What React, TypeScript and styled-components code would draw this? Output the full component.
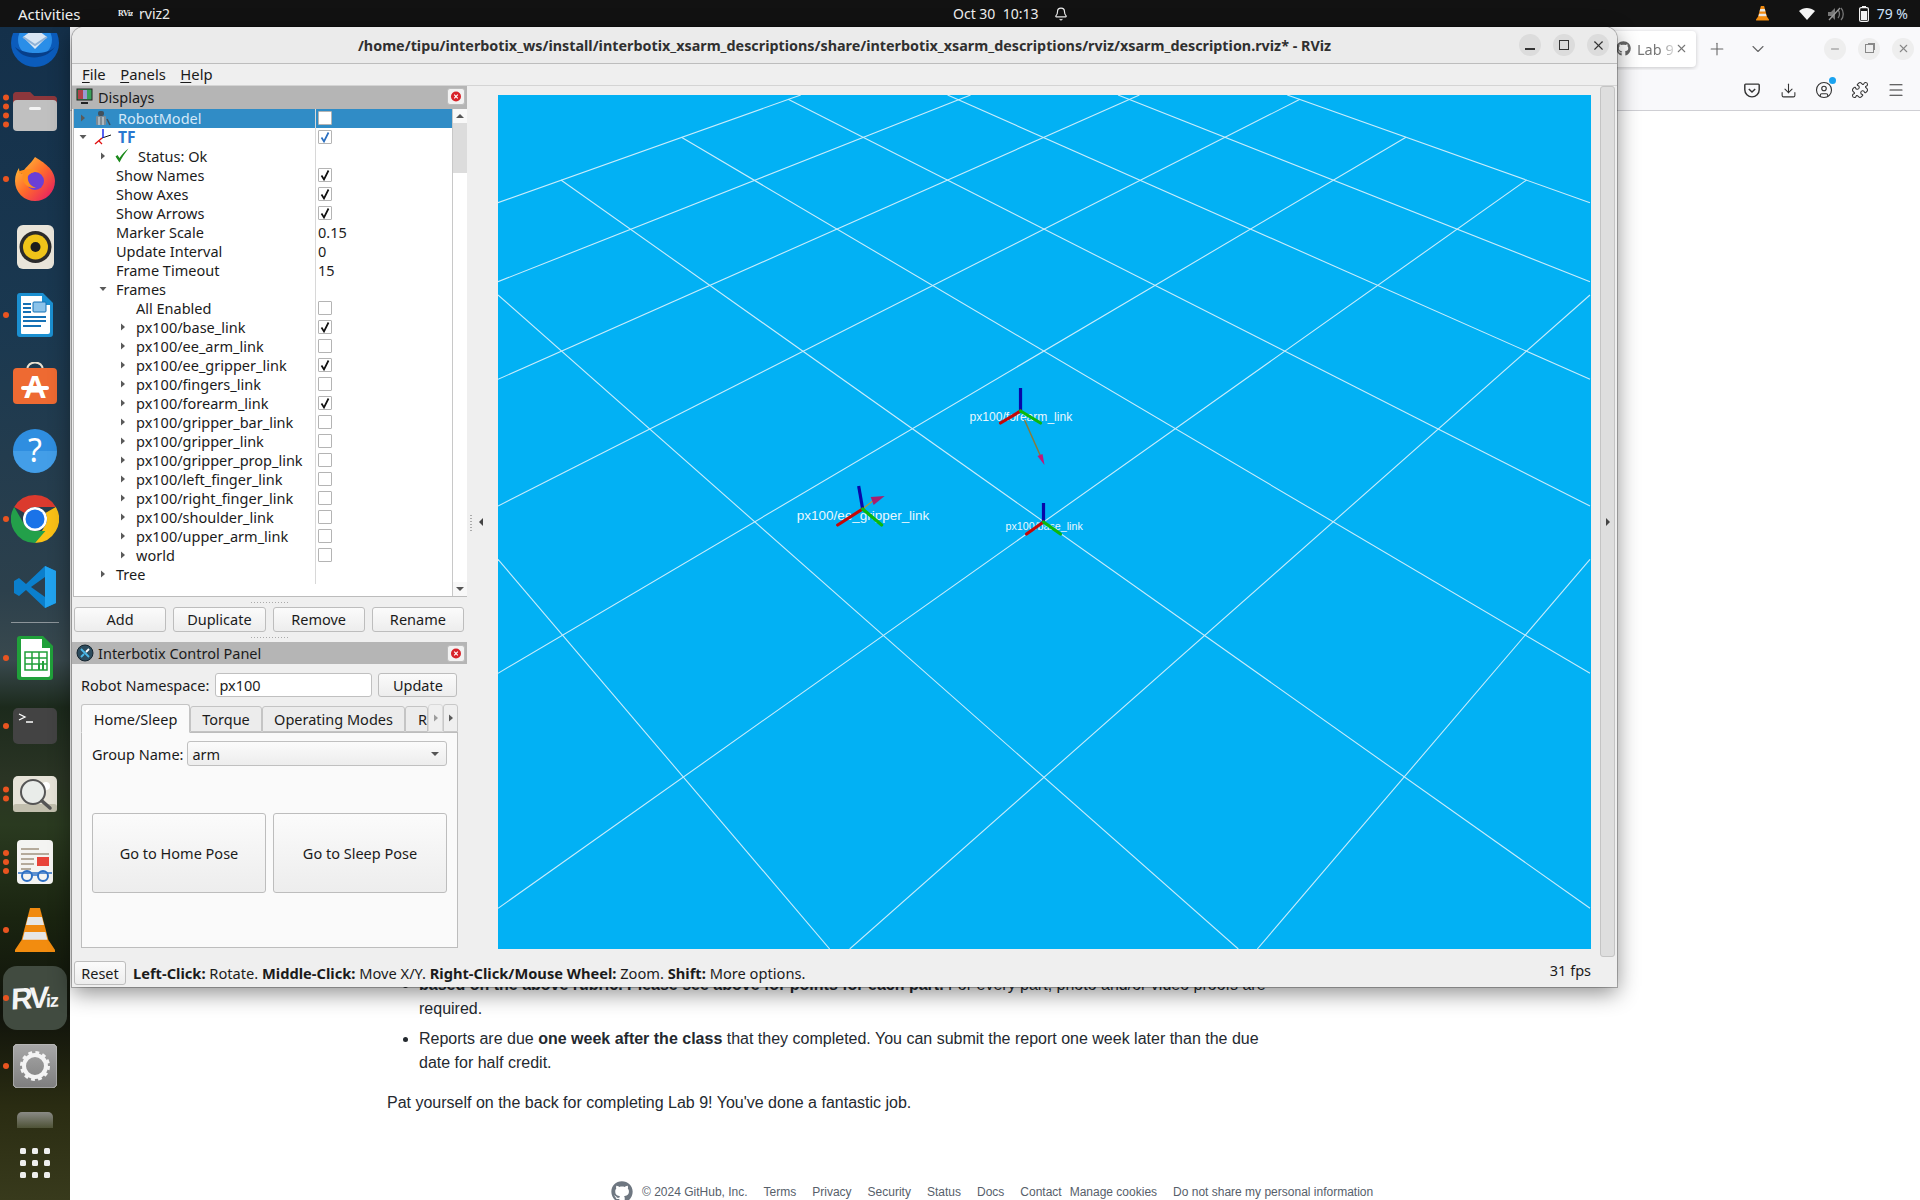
import styled, { createGlobalStyle } from 'styled-components';
import { Bell, ChevronDown, CircleUser, Download, Menu, Plus, Puzzle, Minus, X } from 'lucide-react';
import { FaGithub } from 'react-icons/fa';

const UI_FONT = `"Noto Sans", "Open Sans", sans-serif`;

const GlobalStyle = createGlobalStyle`
  html, body {
    margin: 0;
    padding: 0;
    width: 1920px;
    height: 1200px;
    overflow: hidden;
    background: #fff;
  }
  * { box-sizing: border-box; }
`;

/* ---------- rviz tree data ---------- */

type TreeRow = {
  label: string;
  depth: number;
  arrow?: 'open' | 'closed';
  icon?: 'robot' | 'tf' | 'ok';
  check?: boolean;
  value?: string;
  selected?: boolean;
  blue?: boolean;
};

const frames = [
  ['px100/base_link', true],
  ['px100/ee_arm_link', false],
  ['px100/ee_gripper_link', true],
  ['px100/fingers_link', false],
  ['px100/forearm_link', true],
  ['px100/gripper_bar_link', false],
  ['px100/gripper_link', false],
  ['px100/gripper_prop_link', false],
  ['px100/left_finger_link', false],
  ['px100/right_finger_link', false],
  ['px100/shoulder_link', false],
  ['px100/upper_arm_link', false],
  ['world', false],
] as const;

const rows: TreeRow[] = [
  { label: 'RobotModel', depth: 0, arrow: 'closed', icon: 'robot', check: false, selected: true },
  { label: 'TF', depth: 0, arrow: 'open', icon: 'tf', check: true, blue: true },
  { label: 'Status: Ok', depth: 1, arrow: 'closed', icon: 'ok' },
  { label: 'Show Names', depth: 1, check: true },
  { label: 'Show Axes', depth: 1, check: true },
  { label: 'Show Arrows', depth: 1, check: true },
  { label: 'Marker Scale', depth: 1, value: '0.15' },
  { label: 'Update Interval', depth: 1, value: '0' },
  { label: 'Frame Timeout', depth: 1, value: '15' },
  { label: 'Frames', depth: 1, arrow: 'open' },
  { label: 'All Enabled', depth: 2, check: false },
  ...frames.map(([label, check]) => ({ label, check, depth: 2, arrow: 'closed' as const })),
  { label: 'Tree', depth: 1, arrow: 'closed' },
];

/* grid lines in screen coordinates, the svg viewBox matches the view's place */
const gridLines = [
  [498, 202.7, 801, 95],
  [498, 281.7, 971, 95],
  [498, 379.3, 1140, 95],
  [498, 506, 1300.7, 99.3],
  [498, 673.3, 1406.8, 137.3],
  [498, 908.3, 1527.5, 180],
  [850, 949, 1591, 295],
  [1258, 949, 1591, 559.3],
  [1591, 202.7, 1288, 95],
  [1591, 281.7, 1118.6, 95],
  [1591, 379.3, 948, 95],
  [1591, 506, 788.4, 99.3],
  [1591, 673.3, 681.6, 137.3],
  [1591, 908.3, 561, 180],
  [1239, 949, 498, 295],
  [830, 949, 498, 559.3],
];

const footerLinks = ['Terms', 'Privacy', 'Security', 'Status', 'Docs', 'Contact'];

/* ---------- small drawings ---------- */

const Expander = ({ open }: { open: boolean }) => (
  <svg width="10" height="10" viewBox="0 0 10 10">
    {open ? <path d="M1.5 3h7L5 7z" fill="#5a5a5a" /> : <path d="M3 1.5v7L7 5z" fill="#5a5a5a" />}
  </svg>
);

const RowIcon = ({ kind }: { kind: 'robot' | 'tf' | 'ok' }) => {
  if (kind === 'ok') {
    return (
      <svg width="16" height="15" viewBox="0 0 16 15">
        <path d="M1.500 8.500L3.500 7l2 3C8 6 11 3 14.500.5 11 5 8 9.500 5.500 14.500z" fill="#1c8a1c" />
      </svg>
    );
  }
  if (kind === 'tf') {
    return (
      <svg width="18" height="16" viewBox="0 0 18 16">
        <path d="M8 9L1 15" stroke="#e01010" strokeWidth="1.400" />
        <path d="M8 9l9-3" stroke="#111" strokeWidth="1" />
        <path d="M9 9V0" stroke="#1020f0" strokeWidth="1.400" />
        <path d="M5 12l3 3" stroke="#e01010" strokeWidth="1.200" />
      </svg>
    );
  }
  return (
    <svg width="18" height="16" viewBox="0 0 18 16">
      <rect x="4" y="1" width="6" height="5" rx="2" fill="#41505c" />
      <rect x="2" y="6" width="10" height="9" rx="1" fill="#7d8a94" />
      <path d="M5 7v8M9 7v8" stroke="#dfe6ea" strokeWidth="1" />
      <path d="M13 9l3 6" stroke="#41505c" strokeWidth="1.5" />
    </svg>
  );
};

const CloseBadge = () => (
  <svg width="18" height="17" viewBox="0 0 18 17">
    <rect x=".5" y=".5" width="17" height="16" rx="2.500" fill="#f2f2f2" stroke="#bdbdbd" />
    <circle cx="9" cy="8.500" r="5" fill="#d8232a" />
    <path d="M7.200 6.700l3.600 3.600M10.800 6.700l-3.600 3.600" stroke="#fff" strokeWidth="1.200" />
  </svg>
);

const ScrollArrow = ({ up }: { up: boolean }) => (
  <svg width="12" height="8" viewBox="0 0 12 8">
    <path d={up ? 'M2 6h8L6 2z' : 'M2 2h8L6 6z'} fill="#555" />
  </svg>
);

const Axes = ({ o, blue, red, green }: { o: number[]; blue: number[]; red: number[]; green: number[] }) => (
  <g strokeWidth="3.200" strokeLinecap="round">
    <line x1={o[0]} y1={o[1]} x2={blue[0]} y2={blue[1]} stroke="#0808a8" strokeLinecap="butt" />
    <line x1={o[0]} y1={o[1]} x2={red[0]} y2={red[1]} stroke="#c40808" />
    <line x1={o[0]} y1={o[1]} x2={green[0]} y2={green[1]} stroke="#0cb80c" />
  </g>
);

const Scene = () => (
  <svg width="100%" height="100%" viewBox="498 95 1094 854" preserveAspectRatio="none">
    {gridLines.map(([x1, y1, x2, y2]) => (
      <line key={`${x1}-${y1}-${x2}`} x1={x1} y1={y1} x2={x2} y2={y2} stroke="#c9ecfb" strokeWidth="1.100" />
    ))}
    <SceneLabel x="970" y="421" fontSize="12.100">px100/forearm_link</SceneLabel>
    <SceneLabel x="797" y="520" fontSize="13.500">px100/ee_gripper_link</SceneLabel>
    <SceneLabel x="1006" y="530.500" fontSize="10.700">px100/base_link</SceneLabel>
    <line x1="1025" y1="420" x2="1041" y2="456" stroke="#8a7a3a" strokeWidth="1.500" />
    <path d="M1038 456l5-2 2 11z" fill="#c2187a" />
    <line x1="863" y1="509" x2="873" y2="501" stroke="#a89a3a" strokeWidth="1.500" />
    <path d="M871 497l14-1-11 9z" fill="#a8206e" />
    <Axes o={[1021, 411]} blue={[1021, 388]} red={[1001, 423]} green={[1041, 423]} />
    <Axes o={[863, 509]} blue={[859, 486]} red={[838, 525]} green={[882, 525]} />
    <Axes o={[1044, 522]} blue={[1044, 503]} red={[1027, 534]} green={[1061, 534]} />
  </svg>
);

/* dock artwork */
const Thunderbird = () => (
  <svg width="48" height="48" viewBox="0 0 48 48">
    <circle cx="24" cy="24" r="24" fill="#0b5cbc" />
    <circle cx="24" cy="21" r="17" fill="#2a8ee8" />
    <path d="M12 18l12-9 12 9-12 12z" fill="#d8e6f4" />
    <path d="M12 18l12 8 12-8" fill="none" stroke="#8fb2d6" strokeWidth="2" />
    <path d="M4 28c8 14 30 14 40 0-8 8-30 8-40 0z" fill="#073f8a" />
  </svg>
);

const Files = () => (
  <svg width="44" height="40" viewBox="0 0 44 40">
    <path d="M0 5a4 4 0 014-4h13l4 4h19a4 4 0 014 4v10H0z" fill="#a8452e" />
    <path d="M0 5a4 4 0 014-4h13l4 4h19a4 4 0 014 4v2H0z" fill="#7b2f46" opacity=".6" />
    <rect y="9" width="44" height="31" rx="4" fill="#c0c0c0" />
    <rect x="16" y="16" width="12" height="3" rx="1.500" fill="#f5f5f5" />
  </svg>
);

const Firefox = () => (
  <svg width="44" height="44" viewBox="0 0 44 44">
    <defs>
      <linearGradient id="ffx" x1="0" y1="0" x2="1" y2="1">
        <stop offset="0" stopColor="#ffd23c" />
        <stop offset=".5" stopColor="#ff6a2b" />
        <stop offset="1" stopColor="#e3126e" />
      </linearGradient>
    </defs>
    <path d="M22 0c8 5 20 12 20 24a20 20 0 01-40 0c0-6 2-10 4-13 0 3 1 5 3 6 2-6 8-9 13-17z" fill="url(#ffx)" />
    <circle cx="22" cy="24" r="9" fill="#6b3fd6" />
    <path d="M5 15c6-3 14-5 22 0-6-1-10 1-12 4-1 5 2 10 8 12-9 1-15-6-13-14-2 0-4-1-5-2z" fill="#ff8f1f" />
  </svg>
);

const Rhythmbox = () => (
  <svg width="37" height="44" viewBox="0 0 37 44">
    <rect width="37" height="44" rx="6" fill="#e9e5da" />
    <circle cx="18.500" cy="22" r="16" fill="#2b2b2b" />
    <circle cx="18.500" cy="22" r="12.500" fill="#f0c419" />
    <circle cx="18.500" cy="22" r="5" fill="#1d1d1d" />
  </svg>
);

const Writer = () => (
  <svg width="36" height="44" viewBox="0 0 36 44">
    <path d="M3 0h23l10 10v31a3 3 0 01-3 3H3a3 3 0 01-3-3V3a3 3 0 013-3z" fill="#1b8fd0" />
    <path d="M4 3h21v9h8v27a2 2 0 01-2 2H5a1 1 0 01-1-1z" fill="#fff" />
    <path d="M6 11h8M6 15h8M6 19h8M6 24h23M6 28h23M6 33h18" stroke="#1470b5" strokeWidth="1.800" />
    <rect x="16" y="9" width="13" height="10" rx="1" fill="#8cc3ea" stroke="#1470b5" />
  </svg>
);

const Software = () => (
  <svg width="44" height="42" viewBox="0 0 44 42">
    <path d="M14 8c0-10 16-10 16 0" fill="none" stroke="#e9e0d0" strokeWidth="2" />
    <rect y="6" width="44" height="36" rx="4" fill="#ee6a32" />
    <text x="22" y="36" textAnchor="middle" fontFamily="Liberation Sans" fontWeight="700" fontSize="32" fill="#fff">A</text>
    <rect x="8" y="24" width="28" height="4" rx="2" fill="#fff" />
  </svg>
);

const Help = () => (
  <svg width="44" height="44" viewBox="0 0 44 44">
    <circle cx="22" cy="22" r="22" fill="#2f8ee0" />
    <path d="M0 22a22 22 0 0044 0z" fill="#52a9ec" opacity=".6" />
    <text x="22" y="33" textAnchor="middle" fontFamily="Noto Sans" fontSize="32" fill="#fff">?</text>
  </svg>
);

const Chrome = () => (
  <svg width="48" height="48" viewBox="0 0 48 48">
    <path d="M24 0a24 24 0 0120.800 12H24a12 12 0 00-10.400 6L3.200 12A24 24 0 0124 0z" fill="#db3a2e" />
    <path d="M44.800 12A24 24 0 0124 48l10.400-18a12 12 0 000-12z" fill="#fbc116" />
    <path d="M3.200 12l10.400 18a12 12 0 0010.400 6h10.400L24 48A24 24 0 013.200 12z" fill="#23a04a" />
    <circle cx="24" cy="24" r="12" fill="#fff" />
    <circle cx="24" cy="24" r="9.500" fill="#1a73e8" />
  </svg>
);

const VSCode = () => (
  <svg width="42" height="42" viewBox="0 0 42 42">
    <path d="M31 0l11 5v32l-11 5-19-18-7 6-5-3V15l5-3 7 6z" fill="#0b7fcc" />
    <path d="M31 0l11 5v32l-11 5z" fill="#21a3f0" />
    <path d="M31 11L17 21l14 10z" fill="#2b3f4f" />
  </svg>
);

const Calc = () => (
  <svg width="36" height="44" viewBox="0 0 36 44">
    <path d="M3 0h23l10 10v31a3 3 0 01-3 3H3a3 3 0 01-3-3V3a3 3 0 013-3z" fill="#20a03a" />
    <path d="M4 3h21v9h8v27a2 2 0 01-2 2H5a1 1 0 01-1-1z" fill="#fff" />
    <path d="M8 16h22v18H8zM8 22h22M8 28h22M15 16v18M22 16v18" fill="none" stroke="#20a03a" strokeWidth="1.500" />
    <path d="M21 34v-6h2v6zM25 34v-9h2v9z" fill="#20a03a" />
  </svg>
);

const Terminal = () => (
  <svg width="44" height="36" viewBox="0 0 44 36">
    <rect width="44" height="36" rx="5" fill="#434343" />
    <path d="M6 6l6 3-6 3" fill="none" stroke="#fff" strokeWidth="1.300" />
    <path d="M13 14h7" stroke="#fff" strokeWidth="1.500" />
  </svg>
);

const Magnifier = () => (
  <svg width="44" height="36" viewBox="0 0 44 36">
    <rect width="44" height="36" rx="5" fill="#e6e3d8" />
    <rect y="28" width="44" height="8" rx="3" fill="#c2bfae" />
    <circle cx="33" cy="10" r="4" fill="#fff" />
    <circle cx="20" cy="16" r="12" fill="#e9ece9" stroke="#555" strokeWidth="2" />
    <path d="M29 25l8 7" stroke="#555" strokeWidth="3.500" strokeLinecap="round" />
  </svg>
);

const Reader = () => (
  <svg width="36" height="44" viewBox="0 0 36 44">
    <rect width="36" height="44" rx="4" fill="#f4f4f2" />
    <path d="M4 9h18M4 14h28M4 19h13M4 24h13M4 29h10" stroke="#b5ab9c" strokeWidth="1.800" />
    <rect x="20" y="17" width="12" height="9" fill="#e8443a" />
    <circle cx="10" cy="36" r="5" fill="none" stroke="#2c6fc4" strokeWidth="2" />
    <circle cx="26" cy="36" r="5" fill="none" stroke="#2c6fc4" strokeWidth="2" />
    <path d="M1 33h34M15 35h6" stroke="#2c6fc4" strokeWidth="1.500" />
  </svg>
);

const VlcCone = ({ size }: { size: number }) => (
  <svg width={size} height={size * 1.120} viewBox="0 0 40 45">
    <path d="M15 0h10l9 34H6z" fill="#f08a10" />
    <path d="M13 9h14l2 8H11zM9.500 24h21l2 8H7.500z" fill="#e6e6e6" />
    <path d="M6 33h28l6 9a2 2 0 01-2 3H2a2 2 0 01-2-3z" fill="#f28c0f" />
  </svg>
);

const Gear = () => (
  <svg width="44" height="44" viewBox="0 0 44 44">
    <defs>
      <linearGradient id="gearBg" x1="0" y1="0" x2="0" y2="1">
        <stop offset="0" stopColor="#a8a8a8" />
        <stop offset="1" stopColor="#7e7e7e" />
      </linearGradient>
    </defs>
    <rect width="44" height="44" rx="5" fill="url(#gearBg)" stroke="#c4c4c4" />
    <circle cx="22" cy="22" r="11" fill="none" stroke="#f4f4f4" strokeWidth="4" />
    <circle cx="22" cy="22" r="13.500" fill="none" stroke="#f4f4f4" strokeWidth="3" strokeDasharray="3.800 3.270" />
  </svg>
);

const TopWifi = () => (
  <svg width="16" height="13" viewBox="0 0 16 13">
    <path d="M0 4c4.500-4 11-4 16 0l-8 9z" fill="#f4f4f4" />
  </svg>
);

const TopVolume = () => (
  <svg width="16" height="14" viewBox="0 0 16 14">
    <path d="M0 5h3l4-4v12l-4-4H0z" fill="#777" />
    <path d="M10 3c2 2 2 6 0 8M13 1c3 3 3 9 0 12" fill="none" stroke="#777" strokeWidth="1.300" />
    <path d="M1 13L12 1" stroke="#999" strokeWidth="1.300" />
  </svg>
);

const TopBattery = () => (
  <svg width="10" height="16" viewBox="0 0 10 16">
    <rect x="3" y="0" width="4" height="2" fill="#f4f4f4" />
    <rect x=".6" y="1.600" width="8.800" height="13.800" rx="1.500" fill="none" stroke="#f4f4f4" strokeWidth="1.200" />
    <rect x="2" y="5" width="6" height="9" fill="#f4f4f4" />
  </svg>
);

const PocketIcon = () => (
  <svg width="16" height="15" viewBox="0 0 20 18">
    <path d="M2 1h16a1 1 0 011 1v6a9 9 0 01-18 0V2a1 1 0 011-1z" fill="none" stroke="#333" strokeWidth="1.800" />
    <path d="M6 7l4 4 4-4" fill="none" stroke="#333" strokeWidth="1.800" />
  </svg>
);

const dockApps = [
  { key: 'thunderbird', art: <Thunderbird />, dots: 0 },
  { key: 'files', art: <Files />, dots: 4 },
  { key: 'firefox', art: <Firefox />, dots: 1 },
  { key: 'rhythmbox', art: <Rhythmbox />, dots: 0 },
  { key: 'writer', art: <Writer />, dots: 1 },
  { key: 'software', art: <Software />, dots: 0 },
  { key: 'help', art: <Help />, dots: 0 },
  { key: 'chrome', art: <Chrome />, dots: 1 },
  { key: 'vscode', art: <VSCode />, dots: 0 },
];

const dockAppsLower = [
  { key: 'calc', art: <Calc />, dots: 1 },
  { key: 'terminal', art: <Terminal />, dots: 1 },
  { key: 'magnifier', art: <Magnifier />, dots: 2 },
  { key: 'reader', art: <Reader />, dots: 3 },
  { key: 'vlc', art: <VlcCone size={40} />, dots: 1 },
];

const App = () => {
  return (
    <Screen>
      <GlobalStyle />
      <TopBar>
        <Activities>Activities</Activities>
        <AppName>
          <MiniLogo>RViz</MiniLogo>
          rviz2
        </AppName>
        <Clock>
          Oct 30&nbsp;&nbsp;10:13
          <Bell size={14} color="#eee" />
        </Clock>
        <Tray>
          <VlcCone size={13} />
          <TrayGap $w={30} />
          <TopWifi />
          <TrayGap $w={13} />
          <TopVolume />
          <TrayGap $w={15} />
          <TopBattery />
          <TrayGap $w={8} />
          <Battery>79 %</Battery>
        </Tray>
      </TopBar>

      <Desktop>
        <Dock>
          <DockList>
            {dockApps.map((app, i) => (
              <DockItem key={app.key} $first={i === 0}>
                {app.dots > 0 && (
                  <DotColumn>
                    {Array.from({ length: app.dots }).map((_, n) => (
                      <Dot key={n} />
                    ))}
                  </DotColumn>
                )}
                {app.art}
              </DockItem>
            ))}
            <DockSeparator />
            {dockAppsLower.map((app) => (
              <DockItem key={app.key}>
                <DotColumn>
                  {Array.from({ length: app.dots }).map((_, n) => (
                    <Dot key={n} />
                  ))}
                </DotColumn>
                {app.art}
              </DockItem>
            ))}
            <DockItem>
              <RvizTile>
                <RvizMark>
                  RV<small>iz</small>
                </RvizMark>
              </RvizTile>
              <DotColumn>
                <Dot />
              </DotColumn>
            </DockItem>
            <DockItem>
              <DotColumn>
                <Dot />
              </DotColumn>
              <Gear />
            </DockItem>
            <TrashStub />
          </DockList>
          <AppGrid>
            {Array.from({ length: 9 }).map((_, n) => (
              <AppGridDot key={n} />
            ))}
          </AppGrid>
        </Dock>

        <Browser>
          <TabStrip>
            <BrowserTab>
              <FaGithub size={15} color="#666" />
              <TabTitle>Lab 9</TabTitle>
              <TabClose>
                <X size={13} color="#777" />
              </TabClose>
            </BrowserTab>
            <StripIcon $left={11}>
              <Plus size={20} strokeWidth={1.300} color="#666" />
            </StripIcon>
            <StripIcon $left={21}>
              <ChevronDown size={20} strokeWidth={1.300} color="#666" />
            </StripIcon>
            <WinControls>
              <WinDot>
                <Minus size={12} color="#888" />
              </WinDot>
              <WinDot>
                <RestoreGlyph />
              </WinDot>
              <WinDot>
                <X size={13} color="#888" />
              </WinDot>
            </WinControls>
          </TabStrip>
          <NavBar>
            <NavSlot>
              <PocketIcon />
            </NavSlot>
            <NavSlot>
              <Download size={17} color="#333" strokeWidth={1.500} />
            </NavSlot>
            <NavSlot>
              <CircleUser size={18} color="#333" strokeWidth={1.500} />
              <SyncDot />
            </NavSlot>
            <NavSlot>
              <Puzzle size={18} color="#333" strokeWidth={1.400} />
            </NavSlot>
            <NavSlot>
              <Menu size={18} color="#333" strokeWidth={1.500} />
            </NavSlot>
          </NavBar>
          <Page>
            <Article>
              <Bullets>
                <Bullet $plain>
                  <strong>based on the above rubric. Please see above for points for each part.</strong> For every part,
                  photo and/or video proofs are required.
                </Bullet>
                <Bullet>
                  Reports are due <strong>one week after the class</strong> that they completed. You can submit the
                  report one week later than the due date for half credit.
                </Bullet>
              </Bullets>
              <Closing>Pat yourself on the back for completing Lab 9! You've done a fantastic job.</Closing>
            </Article>
            <Footer>
              <FooterLogo>
                <FaGithub size={22} color="#6e7781" />
              </FooterLogo>
              <span>© 2024 GitHub, Inc.</span>
              {footerLinks.map((l) => (
                <span key={l}>{l}</span>
              ))}
              <Tight>Manage cookies</Tight>
              <span>Do not share my personal information</span>
            </Footer>
          </Page>
        </Browser>
      </Desktop>

      <RvizWindow>
        <TitleBar>
          <TitleText>
            /home/tipu/interbotix_ws/install/interbotix_xsarm_descriptions/share/interbotix_xsarm_descriptions/rviz/xsarm_description.rviz*
            - RViz
          </TitleText>
          <TitleButtons>
            <TitleButton>
              <MinGlyph />
            </TitleButton>
            <TitleButton>
              <MaxGlyph />
            </TitleButton>
            <TitleButton>
              <X size={15} color="#333" strokeWidth={1.800} />
            </TitleButton>
          </TitleButtons>
        </TitleBar>

        <MenuBar>
          <MenuItem>
            <u>F</u>ile
          </MenuItem>
          <MenuItem>
            <u>P</u>anels
          </MenuItem>
          <MenuItem>
            <u>H</u>elp
          </MenuItem>
        </MenuBar>

        <MainArea>
          <SideColumn>
            <PanelTitle $h={23}>
              <svg width="18" height="18" viewBox="0 0 18 18">
                <rect x="1" y="1" width="15" height="11" fill="#3aa05a" stroke="#222" />
                <rect x="2" y="2" width="5" height="9" fill="#b0424a" />
                <rect x="7" y="2" width="4" height="9" fill="#9a9ad0" />
                <path d="M5 15h7" stroke="#222" strokeWidth="2" />
              </svg>
              <PanelName>Displays</PanelName>
              <CloseBadge />
            </PanelTitle>

            <TreeBox>
              <TreeBody>
                {rows.map((row) => (
                  <Row key={row.label} $selected={row.selected}>
                    <NameCell $depth={row.depth} $blue={row.blue} $selected={row.selected}>
                      <ExpanderSlot>{row.arrow && <Expander open={row.arrow === 'open'} />}</ExpanderSlot>
                      {row.icon && (
                        <IconSlot>
                          <RowIcon kind={row.icon} />
                        </IconSlot>
                      )}
                      {row.label}
                    </NameCell>
                    <ValueCell>
                      {row.check !== undefined && (
                        <CheckBox>
                          {row.check && (
                            <svg width="12" height="12" viewBox="0 0 12 12">
                              <path
                                d="M2.500 6.500L5 10.500 9.500 1.500"
                                fill="none"
                                stroke={row.blue ? '#2a6fc0' : '#111'}
                                strokeWidth="1.700"
                              />
                            </svg>
                          )}
                        </CheckBox>
                      )}
                      {row.value}
                    </ValueCell>
                  </Row>
                ))}
              </TreeBody>
              <ScrollBar>
                <ScrollButton>
                  <ScrollArrow up />
                </ScrollButton>
                <ScrollThumb />
                <ScrollTrack />
                <ScrollButton>
                  <ScrollArrow up={false} />
                </ScrollButton>
              </ScrollBar>
            </TreeBox>

            <SplitDots />
            <ActionRow>
              <ActionButton>Add</ActionButton>
              <ActionButton>Duplicate</ActionButton>
              <ActionButton>Remove</ActionButton>
              <ActionButton>Rename</ActionButton>
            </ActionRow>
            <SplitDots />

            <PanelTitle $h={22}>
              <svg width="18" height="18" viewBox="0 0 18 18">
                <circle cx="9" cy="9" r="8" fill="#2c4c5e" stroke="#15242e" />
                <path d="M5 5l8 8M5 13l3-3" stroke="#4bb8e8" strokeWidth="1.800" />
                <path d="M10 8l3-3" stroke="#fff" strokeWidth="1.800" />
              </svg>
              <PanelName>Interbotix Control Panel</PanelName>
              <CloseBadge />
            </PanelTitle>

            <ControlBody>
              <NamespaceRow>
                <NamespaceLabel>Robot Namespace:</NamespaceLabel>
                <NamespaceInput>px100</NamespaceInput>
                <UpdateButton>Update</UpdateButton>
              </NamespaceRow>

              <TabRow>
                <Tab $active $w={109}>
                  Home/Sleep
                </Tab>
                <Tab $w={72}>Torque</Tab>
                <Tab $w={143}>Operating Modes</Tab>
                <Tab $w={23} $clipped>
                  R
                </Tab>
                <TabArrow $faded>
                  <Expander open={false} />
                </TabArrow>
                <TabArrow>
                  <Expander open={false} />
                </TabArrow>
              </TabRow>
              <TabPane>
                <GroupRow>
                  <GroupLabel>Group Name:</GroupLabel>
                  <Combo>
                    arm
                    <svg width="10" height="10" viewBox="0 0 10 10">
                      <path d="M1 3h8L5 7z" fill="#555" />
                    </svg>
                  </Combo>
                </GroupRow>
                <PoseRow>
                  <PoseButton>Go to Home Pose</PoseButton>
                  <PoseButton>Go to Sleep Pose</PoseButton>
                </PoseRow>
              </TabPane>
            </ControlBody>
          </SideColumn>

          <CollapseHandle>
            <VSplitDots />
            <svg width="8" height="10" viewBox="0 0 8 10">
              <path d="M6 1v8L2 5z" fill="#444" />
            </svg>
          </CollapseHandle>

          <ViewColumn>
            <Viewport>
              <Scene />
            </Viewport>
          </ViewColumn>

          <RightGutter>
            <GutterBar>
              <svg width="8" height="10" viewBox="0 0 8 10">
                <path d="M2 1v8l4-4z" fill="#444" />
              </svg>
            </GutterBar>
          </RightGutter>
        </MainArea>

        <StatusBar>
          <ResetButton>Reset</ResetButton>
          <HelpText>
            <b>Left-Click:</b> Rotate. <b>Middle-Click:</b> Move X/Y. <b>Right-Click/Mouse Wheel:</b> Zoom.{' '}
            <b>Shift:</b> More options.
          </HelpText>
          <Fps>31 fps</Fps>
        </StatusBar>
      </RvizWindow>
    </Screen>
  );
};

/* ---------- desktop ---------- */

const Screen = styled.div`
  position: relative;
  display: flex;
  flex-direction: column;
  width: 1920px;
  height: 1200px;
  overflow: hidden;
  font-family: ${UI_FONT};
`;

const TopBar = styled.header`
  position: relative;
  display: flex;
  align-items: center;
  flex: 0 0 27px;
  padding-left: 18px;
  background: #121212;
  color: #f0f0f0;
  font-size: 14px;
`;

const Activities = styled.div`
  width: 100px;
  font-size: 15px;
`;

const AppName = styled.div`
  display: flex;
  align-items: center;
  gap: 6px;
`;

const MiniLogo = styled.span`
  width: 15px;
  overflow: hidden;
  font-family: 'Liberation Serif', serif;
  font-size: 8px;
  font-weight: 700;
  letter-spacing: -0.5px;
  white-space: nowrap;
`;

const Clock = styled.div`
  position: absolute;
  left: 953px;
  display: flex;
  align-items: center;
  gap: 16px;
`;

const Tray = styled.div`
  display: flex;
  align-items: center;
  margin-left: auto;
  padding-right: 12px;
`;

const TrayGap = styled.span<{ $w: number }>`
  width: ${({ $w }) => $w}px;
`;

const Battery = styled.span`
  color: #cfe3fa;
`;

const Desktop = styled.div`
  display: flex;
  flex: 1;
  min-height: 0;
`;

const Dock = styled.nav`
  display: flex;
  flex-direction: column;
  flex: 0 0 70px;
  padding-top: 6px;
  background: linear-gradient(
    180deg,
    #14304a 0%,
    #1a3850 25%,
    #2c404c 48%,
    #39494e 54%,
    #1c2a1c 58%,
    #2a3424 64%,
    #2a3a20 68%,
    #1a2410 76%,
    #10130b 84%,
    #2a2c12 92%,
    #383a1c 100%
  );
`;

const DockList = styled.div`
  display: flex;
  flex-direction: column;
  flex: 0 0 1107px;
  overflow: hidden;
`;

const DockItem = styled.div<{ $first?: boolean }>`
  position: relative;
  display: flex;
  align-items: center;
  justify-content: center;
  flex: 0 0 68px;
  margin-top: ${({ $first }) => ($first ? '-24px' : '0')};
`;

const DotColumn = styled.div`
  position: absolute;
  left: 3px;
  top: 50%;
  display: flex;
  flex-direction: column;
  gap: 3px;
  transform: translateY(-50%);
`;

const Dot = styled.span`
  width: 6px;
  height: 6px;
  border-radius: 50%;
  background: #e95420;
`;

const DockSeparator = styled.div`
  flex: 0 0 1px;
  margin: 1px 11px;
  background: #8c959a;
`;

const RvizTile = styled.div`
  display: flex;
  align-items: center;
  justify-content: center;
  width: 64px;
  height: 64px;
  border-radius: 14px;
  background: #414b40;
`;

const RvizMark = styled.span`
  color: #f4f4f4;
  font-family: 'Liberation Sans', sans-serif;
  font-size: 30px;
  font-weight: 700;
  letter-spacing: -3px;
  transform: rotate(-4deg) skewX(-6deg);

  small {
    font-size: 18px;
    letter-spacing: -1px;
  }
`;

const TrashStub = styled.div`
  flex: 0 0 16px;
  width: 36px;
  margin: 12px 17px 0;
  border-radius: 5px 5px 0 0;
  background: linear-gradient(180deg, #8a8a86, #4e5236);
`;

const AppGrid = styled.div`
  display: grid;
  grid-template-columns: repeat(3, 6px);
  gap: 6px;
  justify-content: center;
  margin-top: 8px;
`;

const AppGridDot = styled.span`
  width: 6px;
  height: 6px;
  border-radius: 1.5px;
  background: #eee;
`;

/* ---------- browser behind the window ---------- */

const Browser = styled.div`
  display: flex;
  flex-direction: column;
  flex: 1;
  min-width: 0;
  background: #fff;
`;

const TabStrip = styled.div`
  display: flex;
  align-items: center;
  flex: 0 0 43px;
  padding-left: 1500px;
  padding-right: 6px;
  background: #f9f9fb;
`;

const BrowserTab = styled.div`
  display: flex;
  align-items: center;
  flex: 0 0 126px;
  gap: 6px;
  height: 36px;
  padding-left: 46px;
  border-radius: 4px;
  background: #fff;
  box-shadow: 0 1px 4px rgba(0, 0, 0, 0.2);
  color: #777;
  font-size: 14.5px;
`;

const TabTitle = styled.span`
  flex: none;
  white-space: nowrap;
  mask-image: linear-gradient(90deg, #000 60%, rgba(0, 0, 0, 0.25));
`;

const TabClose = styled.span`
  display: flex;
  margin-left: -5px;
`;

const StripIcon = styled.span<{ $left: number }>`
  display: flex;
  margin-left: ${({ $left }) => $left}px;
`;

const WinControls = styled.div`
  display: flex;
  gap: 12px;
  margin-left: auto;
`;

const WinDot = styled.span`
  display: flex;
  align-items: center;
  justify-content: center;
  width: 22px;
  height: 22px;
  border-radius: 50%;
  background: #eeeeee;
`;

const RestoreGlyph = styled.span`
  width: 9px;
  height: 9px;
  border: 1px solid #888;
  box-shadow: 2px -2px 0 -1px #888;
`;

const NavBar = styled.div`
  display: flex;
  align-items: center;
  justify-content: flex-end;
  flex: 0 0 41px;
  padding-right: 6px;
  border-bottom: 1px solid #cfcfd4;
  background: #f9f9fb;
`;

const NavSlot = styled.span`
  position: relative;
  display: flex;
  justify-content: center;
  width: 36px;
`;

const SyncDot = styled.span`
  position: absolute;
  top: -4px;
  right: 6px;
  width: 7px;
  height: 7px;
  border-radius: 50%;
  background: #1aa3f0;
`;

const Page = styled.main`
  flex: 1;
  padding: 862px 0 0 317px;
  color: #24292f;
  font-family: 'Liberation Sans', Arial, sans-serif;
  font-size: 16px;
  line-height: 24px;
`;

const Article = styled.article`
  width: 886px;
`;

const Bullets = styled.ul`
  margin: 0 0 16px;
  padding-left: 32px;
`;

const Bullet = styled.li<{ $plain?: boolean }>`
  margin-top: ${({ $plain }) => ($plain ? '0' : '6px')};
`;

const Closing = styled.p`
  margin: 0;
`;

const Footer = styled.footer`
  display: flex;
  align-items: center;
  gap: 16px;
  height: 22px;
  margin: 66px 0 0 224px;
  color: #57606a;
  font-size: 12px;
  white-space: nowrap;
`;

const FooterLogo = styled.span`
  display: flex;
  margin-right: -7px;
`;

const Tight = styled.span`
  margin-left: -8px;
`;

/* ---------- rviz window ---------- */

const RvizWindow = styled.section`
  position: absolute;
  top: 27px;
  left: 72px;
  display: flex;
  flex-direction: column;
  width: 1545px;
  height: 960px;
  overflow: hidden;
  border-radius: 12px 12px 0 0;
  background: #efefef;
  box-shadow: 0 0 0 1px rgba(0, 0, 0, 0.25), 0 6px 22px rgba(0, 0, 0, 0.45);
  color: #1b1b1b;
  font-size: 14.5px;
`;

const TitleBar = styled.div`
  position: relative;
  display: flex;
  align-items: center;
  justify-content: center;
  flex: 0 0 37px;
  border-bottom: 1px solid #bdbdbd;
  background: #ebebeb;
`;

const TitleText = styled.div`
  color: #303030;
  font-size: 14.35px;
  font-weight: 700;
  white-space: nowrap;
`;

const TitleButtons = styled.div`
  position: absolute;
  top: 7px;
  right: 8px;
  display: flex;
  gap: 12px;
`;

const TitleButton = styled.span`
  display: flex;
  align-items: center;
  justify-content: center;
  width: 22px;
  height: 22px;
  border-radius: 50%;
  background: #dcdcdc;
`;

const MinGlyph = styled.span`
  width: 10px;
  height: 1.5px;
  margin-top: 8px;
  background: #333;
`;

const MaxGlyph = styled.span`
  width: 10px;
  height: 10px;
  border: 1.5px solid #333;
`;

const MenuBar = styled.div`
  display: flex;
  align-items: center;
  flex: 0 0 22px;
  gap: 14.5px;
  padding: 0 0 1px 10px;
  border-bottom: 1px solid #d4d4d4;
  font-size: 14.8px;
`;

const MenuItem = styled.span`
  u {
    text-decoration-thickness: 1px;
    text-underline-offset: 2px;
  }
`;

const MainArea = styled.div`
  display: flex;
  flex: 1;
  min-height: 0;
`;

const SideColumn = styled.div`
  display: flex;
  flex-direction: column;
  flex: 0 0 395px;
  min-width: 0;
  overflow: hidden;
`;

const PanelTitle = styled.div<{ $h: number }>`
  display: flex;
  align-items: center;
  flex: 0 0 ${({ $h }) => $h}px;
  gap: 4px;
  padding: 0 2px ${({ $h }) => ($h > 22 ? '2px' : '0')} 4px;
  background: #b5b5b5;
`;

const PanelName = styled.span`
  flex: 1;
`;

const TreeBox = styled.div`
  display: flex;
  flex: 0 0 488px;
  margin-left: 1px;
  border-bottom: 1px solid #bcbcbc;
  border-left: 1px solid #bcbcbc;
  background: #fff;
`;

const TreeBody = styled.div`
  flex: 1;
  min-width: 0;
`;

const Row = styled.div<{ $selected?: boolean }>`
  display: flex;
  height: 19px;
  background: ${({ $selected }) => ($selected ? '#308cc6' : 'transparent')};
`;

const NameCell = styled.div<{ $depth: number; $blue?: boolean; $selected?: boolean }>`
  display: flex;
  align-items: center;
  flex: 0 0 241px;
  padding-left: ${({ $depth }) => 4 + $depth * 20}px;
  padding-bottom: 2px;
  color: ${({ $blue, $selected }) => ($selected ? '#d4e8f8' : $blue ? '#2a78d0' : '#1b1b1b')};
  font-size: ${({ $blue }) => ($blue ? '15.5px' : 'inherit')};
  font-weight: ${({ $blue }) => ($blue ? 700 : 400)};
  white-space: nowrap;
`;

const ExpanderSlot = styled.span`
  display: flex;
  flex: 0 0 10px;
  margin-right: 8px;
`;

const IconSlot = styled.span`
  display: flex;
  flex: 0 0 24px;
  margin-left: -2px;
`;

const ValueCell = styled.div`
  display: flex;
  align-items: center;
  flex: 1;
  padding-left: 2px;
  padding-bottom: 2px;
  border-left: 1px solid #d8d8d8;
`;

const CheckBox = styled.span`
  display: flex;
  align-items: center;
  justify-content: center;
  width: 14px;
  height: 14px;
  margin-top: 1px;
  border: 1px solid #b4b4b4;
  border-radius: 1px;
  background: #fff;
`;

const ScrollBar = styled.div`
  display: flex;
  flex-direction: column;
  flex: 0 0 15px;
  border-left: 1px solid #c8c8c8;
  background: #fff;
`;

const ScrollButton = styled.div`
  display: flex;
  align-items: center;
  justify-content: center;
  flex: 0 0 14px;
  background: #f8f8f8;
`;

const ScrollThumb = styled.div`
  flex: 0 0 50px;
  background: #dcdcdc;
`;

const ScrollTrack = styled.div`
  flex: 1;
`;

const SplitDots = styled.div`
  flex: 0 0 10px;
  background-image: radial-gradient(circle, #aaa 0.7px, transparent 0.8px);
  background-position: center;
  background-repeat: repeat-x;
  background-size: 3px 3px;
  clip-path: inset(3px 178px 3px 178px);
`;

const ActionRow = styled.div`
  display: flex;
  flex: 0 0 25px;
  gap: 7px;
  padding: 0 3px 0 2px;
`;

const QtButton = styled.div`
  display: flex;
  align-items: center;
  justify-content: center;
  flex: 1;
  min-width: 0;
  border: 1px solid #bdbdbd;
  border-radius: 3px;
  background: linear-gradient(180deg, #fbfbfb, #ededed);
  white-space: nowrap;
`;

const ActionButton = styled(QtButton)`
  padding-bottom: 2px;
`;

const ControlBody = styled.div`
  display: flex;
  flex-direction: column;
  flex: 1;
  min-width: 0;
  padding: 9px 9px 0 9px;
`;

const NamespaceRow = styled.div`
  display: flex;
  align-items: center;
  flex: 0 0 24px;
`;

const NamespaceLabel = styled.span`
  flex: 0 0 128px;
  white-space: nowrap;
`;

const NamespaceInput = styled.div`
  display: flex;
  align-items: center;
  flex: 0 0 157px;
  height: 24px;
  margin-left: 6px;
  padding-left: 3px;
  border: 1px solid #c0c0c0;
  border-radius: 3px;
  background: #fff;
`;

const UpdateButton = styled(QtButton)`
  flex: 0 0 79px;
  height: 24px;
  margin-left: 6px;
`;

const TabRow = styled.div`
  display: flex;
  align-items: flex-end;
  flex: 0 0 28px;
  margin-top: 7px;
`;

const Tab = styled.div<{ $active?: boolean; $clipped?: boolean; $w: number }>`
  position: relative;
  z-index: ${({ $active }) => ($active ? 1 : 0)};
  display: flex;
  align-items: center;
  justify-content: ${({ $clipped }) => ($clipped ? 'flex-start' : 'center')};
  flex: 0 0 ${({ $w }) => $w}px;
  height: ${({ $active }) => ($active ? '29px' : '26px')};
  margin-bottom: ${({ $active }) => ($active ? '-1px' : '0')};
  padding-left: ${({ $clipped }) => ($clipped ? '12px' : '0')};
  overflow: hidden;
  border: 1px solid #c4c4c4;
  border-bottom-color: ${({ $active }) => ($active ? '#fafafa' : '#c4c4c4')};
  border-radius: 3px 3px 0 0;
  background: ${({ $active }) => ($active ? '#fafafa' : '#ececec')};
  white-space: nowrap;
`;

const TabArrow = styled.div<{ $faded?: boolean }>`
  display: flex;
  align-items: center;
  justify-content: center;
  flex: 0 0 15px;
  height: 28px;
  border: 1px solid #c8c8c8;
  border-radius: 3px 3px 0 0;
  background: #efefef;
  opacity: ${({ $faded }) => ($faded ? 0.55 : 1)};
`;

const TabPane = styled.div`
  flex: 0 0 216px;
  padding: 8px 10px 0;
  border: 1px solid #bdbdbd;
  background: #fafafa;
`;

const GroupRow = styled.div`
  display: flex;
  align-items: center;
  gap: 4px;
  height: 25px;
`;

const GroupLabel = styled.span`
  flex: none;
  white-space: nowrap;
`;

const Combo = styled.div`
  display: flex;
  align-items: center;
  justify-content: space-between;
  flex: 1;
  min-width: 0;
  height: 25px;
  padding: 0 6px 0 4px;
  border: 1px solid #c0c0c0;
  border-radius: 3px;
  background: linear-gradient(180deg, #fbfbfb, #ededed);
`;

const PoseRow = styled.div`
  display: flex;
  gap: 7px;
  margin-top: 47px;
`;

const PoseButton = styled(QtButton)`
  height: 80px;
`;

const CollapseHandle = styled.div`
  display: flex;
  align-items: center;
  flex: 0 0 31px;
  gap: 5px;
  padding-left: 3px;
`;

const VSplitDots = styled.span`
  width: 2px;
  height: 17px;
  background-image: radial-gradient(circle, #aaa 0.7px, transparent 0.8px);
  background-size: 2px 3px;
`;

const ViewColumn = styled.div`
  flex: 0 0 1093px;
  padding: 9px 0;
`;

const Viewport = styled.div`
  width: 100%;
  height: 854px;
  overflow: hidden;
  background: #02b1f4;
`;

const SceneLabel = styled.text`
  fill: #e9f7fe;
  font-family: 'Liberation Sans', Arial, sans-serif;
`;

const RightGutter = styled.div`
  flex: 1;
  padding: 0 2px 1px 9px;
`;

const GutterBar = styled.div`
  display: flex;
  align-items: center;
  justify-content: center;
  height: 100%;
  border: 1px solid #c4c4c4;
  border-radius: 3px;
  background: #dedede;
`;

const StatusBar = styled.footer`
  display: flex;
  align-items: center;
  flex: 0 0 29px;
  padding: 0 26px 0 2px;
`;

const ResetButton = styled(QtButton)`
  flex: 0 0 52px;
  height: 24px;
  margin-right: 7px;
`;

const HelpText = styled.div`
  flex: 1;
  font-size: 14.65px;
`;

const Fps = styled.div`
  margin-top: -6px;
`;

export default App;
